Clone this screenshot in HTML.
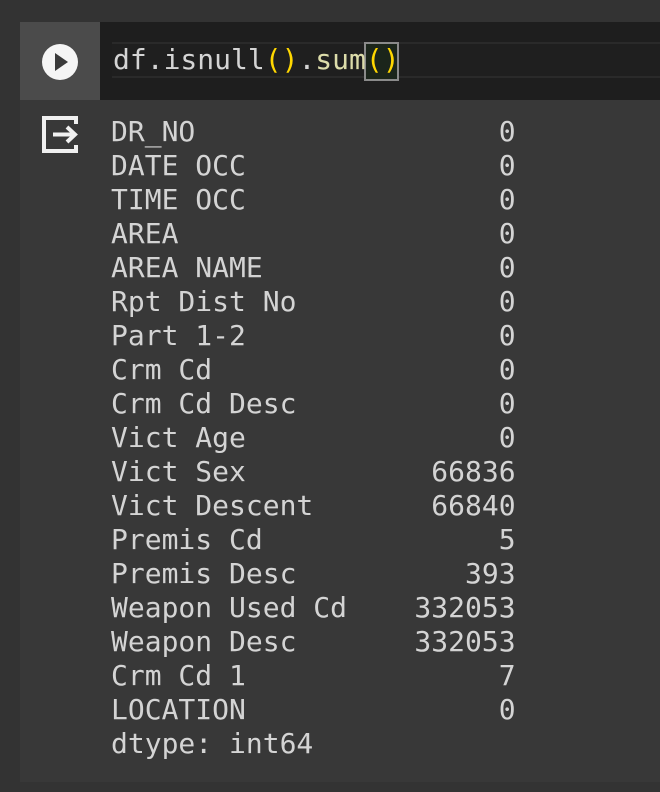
<!DOCTYPE html>
<html><head><meta charset="utf-8"><style>
html,body{margin:0;padding:0;}
body{width:660px;height:792px;background:#333333;position:relative;overflow:hidden;font-family:"DejaVu Sans Mono","Liberation Mono",monospace;}
.cell{position:absolute;left:20px;top:22px;width:640px;height:760px;background:#383838;}
.gutter{position:absolute;left:0;top:0;width:80px;height:78px;background:#4b4b4b;}
.code{position:absolute;left:80px;top:0;width:560px;height:78px;background:#1e1e1e;}
.band{position:absolute;left:12px;top:20px;right:0;height:32px;background:#1f1f1f;border-top:2px solid #2a2a2a;border-bottom:2px solid #2a2a2a;}
.codetxt{position:absolute;left:13px;top:20px;font-size:28px;line-height:36px;color:#d4d4d4;white-space:pre;}
.y{color:#ffd700}.f{color:#dcdcaa}
.br{position:absolute;left:264px;top:20px;width:31px;height:35px;border:2px solid #8a8a8a;background:#1b251b;}
pre{position:absolute;left:91px;top:93px;margin:0;font-family:"DejaVu Sans Mono","Liberation Mono",monospace;font-size:28px;line-height:34px;color:#d4d4d4;}
</style></head><body>
<div class="cell">
<div class="gutter"><svg width="80" height="78" style="position:absolute;left:0;top:0"><circle cx="40" cy="40" r="18" fill="#f5f5f5"/><path d="M35 31 L48 40 L35 49 Z" fill="#3a3a3a"/></svg></div>
<div class="code"><div class="band"></div><div class="br"></div><div class="codetxt">df.isnull<span class="y">()</span>.<span class="f">sum</span><span class="y">()</span></div></div>
<svg width="50" height="50" style="position:absolute;left:20px;top:92px"><path d="M36 10 V4 H4 V37 H36 V31" fill="none" stroke="#f0f0f0" stroke-width="4" stroke-linejoin="miter"/><path d="M13 20.5 H34 M27 13 L35 20.5 L27 28" fill="none" stroke="#f0f0f0" stroke-width="4"/></svg>
<pre>DR_NO                  0
DATE OCC               0
TIME OCC               0
AREA                   0
AREA NAME              0
Rpt Dist No            0
Part 1-2               0
Crm Cd                 0
Crm Cd Desc            0
Vict Age               0
Vict Sex           66836
Vict Descent       66840
Premis Cd              5
Premis Desc          393
Weapon Used Cd    332053
Weapon Desc       332053
Crm Cd 1               7
LOCATION               0
dtype: int64</pre>
</div>
</body></html>
